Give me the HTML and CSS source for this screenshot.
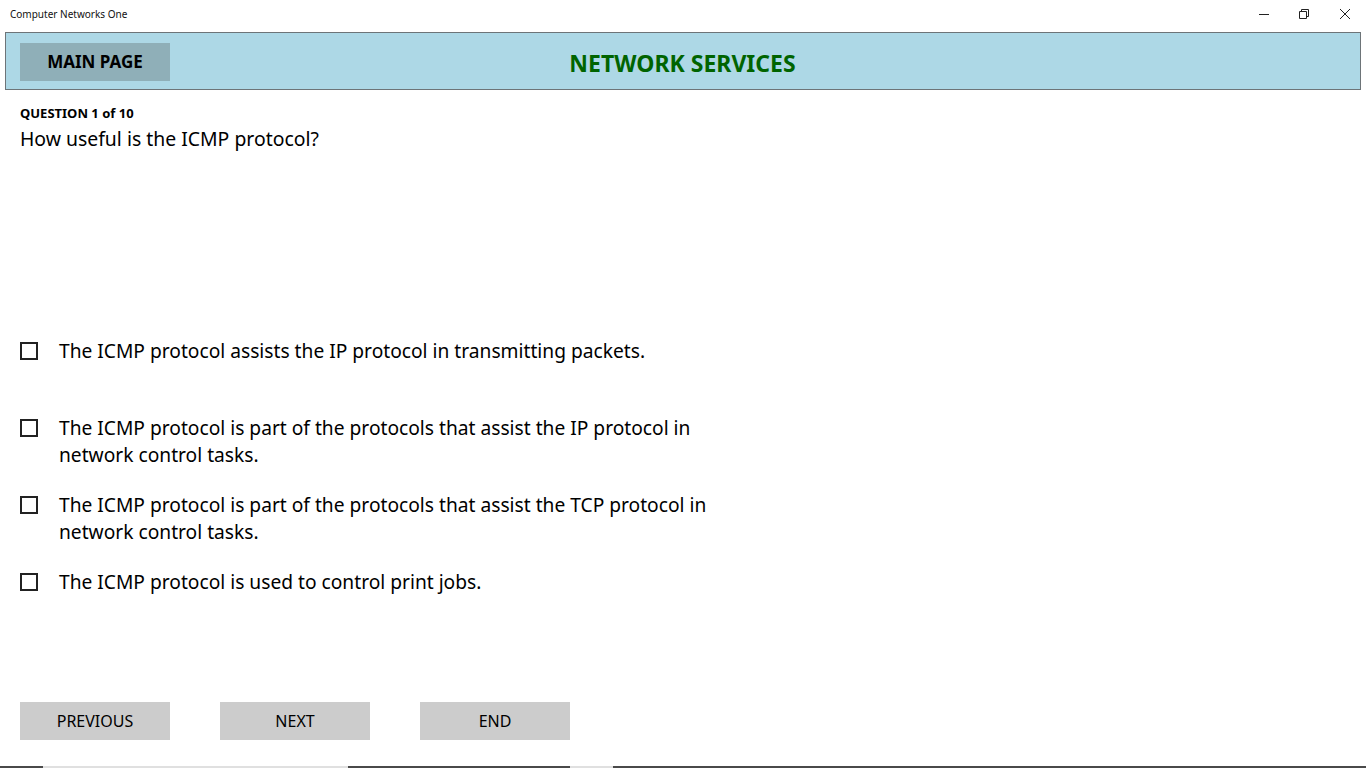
FILE: index.html
```html
<!DOCTYPE html>
<html>
<head>
<meta charset="utf-8">
<link rel="stylesheet" href="styles.css">
</head>
<body>
<div class="app">
  <div class="titlebar">
    <span class="apptitle">Computer Networks One</span>
    <div class="winctl">
      <span class="ctl"><svg width="12" height="12" viewBox="0 0 12 12"><path d="M1 6.5H11" stroke="#222" stroke-width="1"/></svg></span>
      <span class="ctl"><svg width="12" height="12" viewBox="0 0 12 12"><path d="M1.5 3.5H8.5V10.5H1.5Z M3.5 3.5V1.5H10.5V8.5H8.5" fill="none" stroke="#222" stroke-width="1"/></svg></span>
      <span class="ctl"><svg width="12" height="12" viewBox="0 0 12 12"><path d="M1 1L11 11M11 1L1 11" stroke="#222" stroke-width="1"/></svg></span>
    </div>
  </div>
  <div class="header">
    <button class="mainbtn">MAIN PAGE</button>
    <h1 class="title">NETWORK SERVICES</h1>
  </div>
  <div class="content">
    <div class="qlabel">QUESTION 1 of 10</div>
    <div class="qtext">How useful is the ICMP protocol?</div>
    <div class="options">
      <label class="opt"><span class="box"></span><span class="otext">The ICMP protocol assists the IP protocol in transmitting packets.</span></label>
      <label class="opt"><span class="box"></span><span class="otext">The ICMP protocol is part of the protocols that assist the IP protocol in network control tasks.</span></label>
      <label class="opt"><span class="box"></span><span class="otext">The ICMP protocol is part of the protocols that assist the TCP protocol in network control tasks.</span></label>
      <label class="opt"><span class="box"></span><span class="otext">The ICMP protocol is used to control print jobs.</span></label>
    </div>
    <div class="nav">
      <button class="navbtn">PREVIOUS</button>
      <button class="navbtn">NEXT</button>
      <button class="navbtn">END</button>
    </div>
  </div>
  <div class="bottombar">
    <span class="seg dark s1"></span><span class="seg light s2"></span><span class="seg dark s3"></span><span class="seg light s4"></span><span class="seg dark s5"></span>
  </div>
</div>
</body>
</html>
```
FILE: styles.css
```css
* { box-sizing: border-box; }
html, body { margin: 0; padding: 0; background: #fff; }
body { font-family: "Noto Sans", "Open Sans", sans-serif; color: #000; width: 1366px; height: 768px; overflow: hidden; }
.app { display: flex; flex-direction: column; height: 768px; }
.titlebar { height: 32px; display: flex; align-items: flex-start; justify-content: space-between; }
.apptitle { font-size: 10px; padding-left: 10px; padding-top: 7px; color: #111; }
.winctl { display: flex; height: 28px; }
.ctl { width: 40px; height: 28px; display: flex; align-items: center; justify-content: center; }
.winctl .ctl:last-child { width: 42px; }
.header { margin: 0 5px; height: 58px; background: #ADD8E6; border: 1px solid #6d7478; display: flex; align-items: center; padding-left: 14px; }
.mainbtn { width: 150px; height: 38px; background: #8FAFB8; border: none; font-family: inherit; font-weight: 700; font-size: 17px; color: #000; margin-top: 1px; }
.title { flex: 1; margin: 0; text-align: center; font-size: 23px; font-weight: 700; color: #006400; padding-right: 165px; margin-top: 4px; }
.content { flex: 1; padding: 14px 20px 0; display: flex; flex-direction: column; }
.qlabel { font-size: 13px; font-weight: 700; line-height: 18px; }
.qtext { font-size: 19.4px; line-height: 28px; margin-top: 3px; }
.options { margin-top: 184px; display: flex; flex-direction: column; }
.opt { display: flex; align-items: flex-start; width: 720px; }
.opt:nth-child(1) { height: 77px; }
.opt:nth-child(2) { height: 77px; }
.opt:nth-child(3) { height: 77px; }
.box { width: 18px; height: 18px; border: 2px solid #222; flex: none; margin-top: 5px; margin-right: 21px; }
.otext { font-size: 19.2px; line-height: 27px; }
.nav { margin-top: 107px; display: flex; gap: 50px; }
.navbtn { width: 150px; height: 38px; background: #CCCCCC; border: none; font-family: inherit; font-size: 16px; color: #000; padding: 0; }
.bottombar { height: 2px; display: flex; }
.seg { height: 2px; }
.dark { background: #4a4a4a; }
.light { background: #e0e0e0; }
.s1 { width: 43px; } .s2 { width: 305px; } .s3 { width: 222px; } .s4 { width: 43px; } .s5 { flex: 1; }
```
